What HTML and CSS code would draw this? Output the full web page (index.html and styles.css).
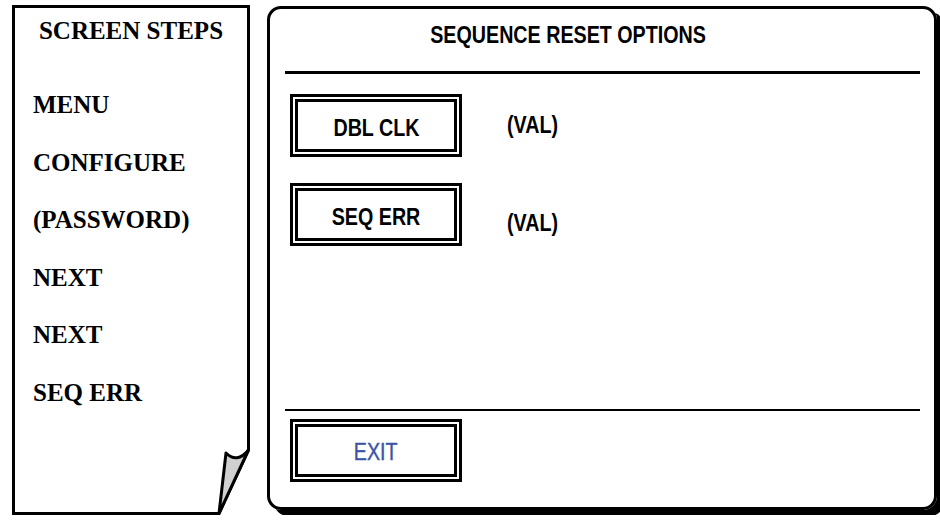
FILE: index.html
```html
<!DOCTYPE html>
<html>
<head>
    <link rel="stylesheet" href="styles.css">
</head>
<body>

<div class="steps">
    <svg class="page-outline" width="238" height="510" viewBox="0 0 238 510">
        <path d="M1.5,1.5 H236.5 V445 L207,508.5 H1.5 Z" fill="#fff" stroke="#000" stroke-width="3" stroke-linejoin="miter"/>
        <path d="M214,448 Q225,459 236.5,445 L207,508.5 Z" fill="#d0d0d0" stroke="#000" stroke-width="3" stroke-linejoin="round"/>
    </svg>
    <div class="steps-title">SCREEN STEPS</div>
    <ul class="steps-list">
        <li>MENU</li>
        <li>CONFIGURE</li>
        <li>(PASSWORD)</li>
        <li>NEXT</li>
        <li>NEXT</li>
        <li>SEQ ERR</li>
    </ul>
</div>

<div class="screen">
    <div class="screen-title"><span class="narrow">SEQUENCE RESET OPTIONS</span></div>
    <div class="rule"></div>
    <div class="screen-body">
        <div class="option">
            <div class="key"><span class="key-face"><span class="narrow">DBL CLK</span></span></div>
            <span class="val"><span class="narrow">(VAL)</span></span>
        </div>
        <div class="option">
            <div class="key"><span class="key-face"><span class="narrow">SEQ ERR</span></span></div>
            <span class="val val-low"><span class="narrow">(VAL)</span></span>
        </div>
    </div>
    <div class="rule"></div>
    <div class="screen-foot">
        <div class="key"><span class="key-face exit"><span class="narrow">EXIT</span></span></div>
    </div>
</div>

</body>
</html>
```

FILE: styles.css
```css
body {
    margin: 0;
    padding: 5px 0 0 12px;
    display: flex;
    align-items: flex-start;
    background-color: #fff;
    font-family: "Liberation Sans", Arial, sans-serif;
}
.steps {
    position: relative;
    width: 238px;
    height: 510px;
    box-sizing: border-box;
    padding-top: 6px;
    font-family: "Liberation Serif", "Times New Roman", serif;
    font-weight: bold;
    font-size: 25px;
    color: #000;
}
.page-outline {
    position: absolute;
    left: 0;
    top: 0;
}
.steps-title {
    position: relative;
    text-align: center;
    line-height: 40px;
}
.steps-list {
    position: relative;
    list-style: none;
    margin: 25px 0 0 0;
    padding: 0 0 0 21px;
}
.steps-list li {
    line-height: 57.6px;
}
.screen {
    margin: 1px 0 0 17px;
    width: 670px;
    height: 504px;
    box-sizing: border-box;
    border: 3px solid #000;
    border-radius: 14px;
    box-shadow: 7px 6px 0 #000;
    display: flex;
    flex-direction: column;
    font-weight: bold;
    font-size: 24px;
}
/* Arial Narrow look: Liberation has no narrow cut here */
.narrow {
    display: inline-block;
    transform: scaleX(0.82);
    white-space: nowrap;
}
.screen-title {
    height: 62px;
    line-height: 52px;
    text-align: center;
    padding-right: 68px;
}
.rule {
    height: 2.5px;
    background-color: #000;
    margin: 0 14px 0 15px;
}
.screen-body {
    flex: 1;
    padding: 20px 0 0 20px;
}
.option {
    display: flex;
    align-items: flex-start;
    margin-bottom: 26px;
}
.key {
    width: 172px;
    height: 63px;
    box-sizing: border-box;
    border: 3px solid #000;
    padding: 2px;
}
.key-face {
    display: flex;
    align-items: center;
    justify-content: center;
    height: 100%;
    box-sizing: border-box;
    border: 3px solid #000;
    padding-top: 6px;
    line-height: 24px;
}
.key-face.exit {
    padding-top: 2px;
    color: #3b52a6;
    font-weight: normal;
    -webkit-text-stroke: 0.4px #3b52a6;
}
.val {
    margin-left: 45px;
    padding-top: 19px;
    line-height: 24px;
}
.val .narrow {
    transform-origin: left center;
}
.val-low {
    padding-top: 28px;
}
.screen-foot {
    padding: 8px 0 0 20px;
    height: 96px;
    box-sizing: border-box;
}
```
